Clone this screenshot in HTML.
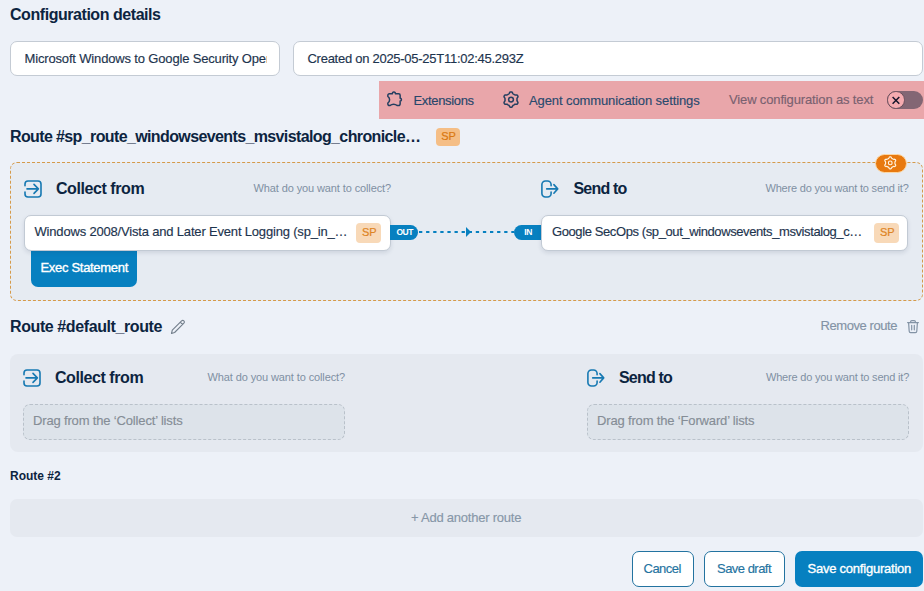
<!DOCTYPE html>
<html><head><meta charset="utf-8">
<style>
html,body{margin:0;padding:0;}
body{width:924px;height:591px;overflow:hidden;background:#edf1f8;position:relative;font-family:"Liberation Sans",sans-serif;}
.a{position:absolute;box-sizing:border-box;}
.t{position:absolute;white-space:nowrap;}
.f16{font-size:16px;line-height:17px;font-weight:700;color:#0c2440;}
.f15{font-size:15px;line-height:17px;font-weight:700;color:#0c2440;}
.f13{font-size:13px;line-height:15px;color:#1d344e;-webkit-text-stroke:0.15px currentColor;}
.f12{font-size:12px;line-height:14px;}
.f11{font-size:11px;line-height:12px;color:#7f90a3;}
.input{background:#fff;border:1px solid #c4cbd4;border-radius:7px;}
.card{background:#fff;border:1px solid #c2cad4;border-radius:7px;box-shadow:0 2px 4px rgba(30,50,80,0.12);}
.sp{position:absolute;box-sizing:border-box;width:25px;height:20px;border-radius:4px;background:#f8d9b8;color:#de8424;font-size:11px;line-height:18px;text-align:center;padding-left:1.5px;-webkit-text-stroke:0.2px currentColor;}
.drop{background:#dde3ea;border:1px dashed #b9c1ca;border-radius:7px;}
.btn{background:#fff;border:1px solid #2373a0;border-radius:7px;}
svg{position:absolute;overflow:visible;}
</style></head><body>

<!-- header -->
<div class="t f16" style="left:10px;top:6px;letter-spacing:-0.45px;">Configuration details</div>

<div class="a input" style="left:10px;top:41px;width:270px;height:35px;"></div>
<div class="t f13" style="left:24.5px;top:51px;letter-spacing:-0.16px;width:242.5px;overflow:hidden;">Microsoft Windows to Google Security Operations</div>
<div class="a input" style="left:293px;top:41px;width:630px;height:35px;"></div>
<div class="t f13" style="left:307.5px;top:51px;letter-spacing:-0.27px;">Created on 2025-05-25T11:02:45.293Z</div>

<!-- pink bar -->
<div class="a" style="left:379px;top:81px;width:545px;height:37.5px;background:#e9a6aa;"></div>
<svg style="left:387px;top:91px" width="16" height="16" viewBox="0 0 16 16" fill="none" stroke="#243f60" stroke-width="1.5" stroke-linejoin="round">
  <path d="M2.34 2.8 H5.45 A1.5 1.5 0 1 1 8.35 2.8 H11.65 A1.5 1.5 0 0 1 13.15 4.3 V7.37 A1.3 1.3 0 0 1 13.15 9.97 V13.05 A1.5 1.5 0 0 1 11.65 14.55 H10.4 A6.4 6.4 0 0 0 2.8 14.55 H2.34 A1.5 1.5 0 0 1 0.84 13.05 V12 A3.97 3.97 0 0 0 0.84 5.4 V4.3 A1.5 1.5 0 0 1 2.34 2.8 Z"/>
</svg>
<div class="t f13" style="left:413.5px;top:93px;letter-spacing:-0.33px;color:#27466a;">Extensions</div>
<svg style="left:503px;top:91px" width="16" height="17" viewBox="0 0 16 17" fill="none" stroke="#243f60" stroke-width="1.5" stroke-linejoin="round">
  <path d="M14.00 8.60L13.98 9.12L13.99 9.66L14.26 10.28L14.88 11.11L14.98 11.85L14.67 12.45L14.31 13.02L13.61 13.31L12.58 13.18L11.91 13.26L11.44 13.52L11.00 13.80L10.54 14.04L10.08 14.32L9.68 14.86L9.27 15.81L8.67 16.27L8.00 16.30L7.33 16.27L6.73 15.81L6.32 14.86L5.92 14.32L5.46 14.04L5.00 13.80L4.56 13.52L4.09 13.26L3.42 13.18L2.39 13.31L1.69 13.02L1.33 12.45L1.02 11.85L1.12 11.11L1.74 10.28L2.01 9.66L2.02 9.12L2.00 8.60L2.02 8.08L2.01 7.54L1.74 6.92L1.12 6.09L1.02 5.35L1.33 4.75L1.69 4.18L2.39 3.89L3.42 4.02L4.09 3.94L4.56 3.68L5.00 3.40L5.46 3.16L5.92 2.88L6.32 2.34L6.73 1.39L7.33 0.93L8.00 0.90L8.67 0.93L9.27 1.39L9.68 2.34L10.08 2.88L10.54 3.16L11.00 3.40L11.44 3.68L11.91 3.94L12.58 4.02L13.61 3.89L14.31 4.18L14.67 4.75L14.98 5.35L14.88 6.09L14.26 6.92L13.99 7.54L13.98 8.08Z"/>
  <circle cx="8" cy="8.6" r="2.4"/>
</svg>
<div class="t f13" style="left:529px;top:93px;letter-spacing:-0.1px;color:#2a4a6e;">Agent communication settings</div>
<div class="t f13" style="left:729px;top:92px;letter-spacing:-0.14px;color:#7a6170;">View configuration as text</div>
<div class="a" style="left:887px;top:91px;width:36px;height:17.6px;border-radius:9px;background:#836674;"></div>
<div class="a" style="left:887px;top:91px;width:17.6px;height:17.6px;border-radius:50%;background:#f5abb0;border:1px solid #6b4f5c;"></div>
<svg style="left:891px;top:95px" width="10" height="10" viewBox="0 0 10 10" stroke="#15152a" stroke-width="1.5" stroke-linecap="butt">
  <path d="M1.6 2 L8.3 8.7 M8.3 2 L1.6 8.7"/>
</svg>

<!-- Route 1 -->
<div class="t f16" style="left:10px;top:128px;letter-spacing:-0.62px;">Route #sp_route_windowsevents_msvistalog_chronicle…</div>
<div class="a" style="left:436px;top:128px;width:24px;height:17.5px;border-radius:4px;background:#f5be86;color:#da7810;font-size:11px;line-height:16px;text-align:center;padding-left:1px;-webkit-text-stroke:0.2px currentColor;">SP</div>

<div class="a" style="left:10px;top:162px;width:913px;height:139px;border:1px dashed #d59a4a;border-radius:7px;background:#e6ebf2;"></div>
<div class="a" style="left:874.5px;top:153.5px;width:32px;height:19.5px;border-radius:10px;background:#e8790f;border:1px solid #fcd7a4;"></div>
<svg style="left:884px;top:156.2px" width="12.5" height="13.6" viewBox="0 0 16 17" fill="none" stroke="#fff3e0" stroke-width="1.5" stroke-linejoin="round">
  <path d="M14.00 8.60L13.98 9.12L13.99 9.66L14.26 10.28L14.88 11.11L14.98 11.85L14.67 12.45L14.31 13.02L13.61 13.31L12.58 13.18L11.91 13.26L11.44 13.52L11.00 13.80L10.54 14.04L10.08 14.32L9.68 14.86L9.27 15.81L8.67 16.27L8.00 16.30L7.33 16.27L6.73 15.81L6.32 14.86L5.92 14.32L5.46 14.04L5.00 13.80L4.56 13.52L4.09 13.26L3.42 13.18L2.39 13.31L1.69 13.02L1.33 12.45L1.02 11.85L1.12 11.11L1.74 10.28L2.01 9.66L2.02 9.12L2.00 8.60L2.02 8.08L2.01 7.54L1.74 6.92L1.12 6.09L1.02 5.35L1.33 4.75L1.69 4.18L2.39 3.89L3.42 4.02L4.09 3.94L4.56 3.68L5.00 3.40L5.46 3.16L5.92 2.88L6.32 2.34L6.73 1.39L7.33 0.93L8.00 0.90L8.67 0.93L9.27 1.39L9.68 2.34L10.08 2.88L10.54 3.16L11.00 3.40L11.44 3.68L11.91 3.94L12.58 4.02L13.61 3.89L14.31 4.18L14.67 4.75L14.98 5.35L14.88 6.09L14.26 6.92L13.99 7.54L13.98 8.08Z"/>
  <circle cx="8" cy="8.6" r="2.4"/>
</svg>

<svg style="left:24px;top:180px" width="18" height="18" viewBox="0 0 18 18" fill="none" stroke="#1779b2" stroke-width="1.6" stroke-linecap="round" stroke-linejoin="round">
  <path d="M1 5.8 V4 A3 3 0 0 1 4 1 H14 A3 3 0 0 1 17 4 V14 A3 3 0 0 1 14 17 H4 A3 3 0 0 1 1 14 V12"/>
  <path d="M3 8.9 H14.4 M10 4.4 L14.4 8.9 L10 13.4"/>
</svg>
<div class="t f16" style="left:56px;top:180px;letter-spacing:-0.43px;">Collect from</div>
<div class="t f11" style="left:253.5px;top:182px;letter-spacing:-0.11px;">What do you want to collect?</div>

<svg style="left:540px;top:180px" width="18" height="18" viewBox="0 0 18 18" fill="none" stroke="#1779b2" stroke-width="1.6" stroke-linecap="round" stroke-linejoin="round">
  <path d="M11.1 5.8 V4.5 A3.5 3.5 0 0 0 7.6 1 H5.4 A3.5 3.5 0 0 0 1.9 4.5 V13.5 A3.5 3.5 0 0 0 5.4 17 H7.6 A3.5 3.5 0 0 0 11.1 13.5 V12"/>
  <path d="M6.7 8.9 H17.7 M13.9 4.6 L17.7 8.9 L13.9 13.2"/>
</svg>
<div class="t f16" style="left:573.5px;top:180px;letter-spacing:-0.8px;">Send to</div>
<div class="t f11" style="left:765.5px;top:182px;letter-spacing:-0.19px;">Where do you want to send it?</div>

<!-- exec statement -->
<div class="a" style="left:31px;top:244px;width:106px;height:43px;background:#0780c0;border-radius:0 0 7px 7px;"></div>
<div class="t f13" style="left:40.5px;top:260px;letter-spacing:-0.31px;color:#fff;-webkit-text-stroke:0.35px #fff;">Exec Statement</div>

<!-- left card -->
<div class="a card" style="left:24px;top:215px;width:367px;height:36px;"></div>
<div class="t f13" style="left:34.5px;top:224px;letter-spacing:-0.18px;">Windows 2008/Vista and Later Event Logging (sp_in_…</div>
<div class="sp" style="left:356px;top:223px;">SP</div>

<!-- connector -->
<div class="a" style="left:390px;top:225px;width:28px;height:15px;background:#0780c0;border-radius:0 8px 8px 0;"></div>
<div class="t" style="left:396.5px;top:227px;font-size:8.5px;line-height:10px;font-weight:700;color:#fff;letter-spacing:-0.5px;">OUT</div>
<svg style="left:418px;top:226px" width="96" height="12" viewBox="0 0 96 12">
  <line x1="1" y1="6" x2="96" y2="6" stroke="#0780c0" stroke-width="2" stroke-dasharray="3.3 3.8"/>
  <path d="M48 1 L53 6 L48 11 Z" fill="#0780c0"/>
</svg>
<div class="a" style="left:514px;top:225px;width:28px;height:15px;background:#0780c0;border-radius:8px 0 0 8px;"></div>
<div class="t" style="left:524.2px;top:227px;font-size:8.5px;line-height:10px;font-weight:700;color:#fff;letter-spacing:-0.3px;">IN</div>

<!-- right card -->
<div class="a card" style="left:541px;top:215px;width:367px;height:36px;"></div>
<div class="t f13" style="left:552px;top:224px;letter-spacing:-0.4px;">Google SecOps (sp_out_windowsevents_msvistalog_c…</div>
<div class="sp" style="left:874px;top:223px;">SP</div>

<!-- Route default -->
<div class="t f16" style="left:10px;top:318px;letter-spacing:-0.4px;">Route #default_route</div>
<svg style="left:171px;top:320px" width="14" height="14" viewBox="0 0 14 14" fill="none" stroke="#737f8c" stroke-width="1.1" stroke-linejoin="round">
  <path d="M0.5 13.5 L1.3 10.2 L10.6 0.9 A1.6 1.6 0 0 1 12.9 3.2 L3.6 12.5 Z M9.3 2.2 L11.6 4.5"/>
</svg>
<div class="t f13" style="left:820.5px;top:318px;letter-spacing:-0.43px;color:#8393a5;">Remove route</div>
<svg style="left:907px;top:320px" width="12" height="14" viewBox="0 0 12 14" fill="none" stroke="#8393a5" stroke-width="1.2" stroke-linecap="round" stroke-linejoin="round">
  <path d="M0.6 2.6 H11.4 M3.6 2.6 V1.8 A1.2 1.2 0 0 1 4.8 0.6 H7.2 A1.2 1.2 0 0 1 8.4 1.8 V2.6 M1.6 2.6 L2.2 11.3 A1.4 1.4 0 0 0 3.6 12.6 H8.4 A1.4 1.4 0 0 0 9.8 11.3 L10.4 2.6 M4.7 5.3 V9.8 M7.3 5.3 V9.8"/>
</svg>

<div class="a" style="left:10px;top:354px;width:913px;height:98px;background:#e5e9f0;border-radius:8px;"></div>
<svg style="left:23px;top:369px" width="18" height="18" viewBox="0 0 18 18" fill="none" stroke="#1779b2" stroke-width="1.6" stroke-linecap="round" stroke-linejoin="round">
  <path d="M1 5.8 V4 A3 3 0 0 1 4 1 H14 A3 3 0 0 1 17 4 V14 A3 3 0 0 1 14 17 H4 A3 3 0 0 1 1 14 V12"/>
  <path d="M3 8.9 H14.4 M10 4.4 L14.4 8.9 L10 13.4"/>
</svg>
<div class="t f16" style="left:55px;top:369px;letter-spacing:-0.43px;">Collect from</div>
<div class="t f11" style="left:207.5px;top:371px;letter-spacing:-0.11px;">What do you want to collect?</div>
<svg style="left:586px;top:369px" width="18" height="18" viewBox="0 0 18 18" fill="none" stroke="#1779b2" stroke-width="1.6" stroke-linecap="round" stroke-linejoin="round">
  <path d="M11.1 5.8 V4.5 A3.5 3.5 0 0 0 7.6 1 H5.4 A3.5 3.5 0 0 0 1.9 4.5 V13.5 A3.5 3.5 0 0 0 5.4 17 H7.6 A3.5 3.5 0 0 0 11.1 13.5 V12"/>
  <path d="M6.7 8.9 H17.7 M13.9 4.6 L17.7 8.9 L13.9 13.2"/>
</svg>
<div class="t f16" style="left:619px;top:369px;letter-spacing:-0.8px;">Send to</div>
<div class="t f11" style="left:766px;top:371px;letter-spacing:-0.19px;">Where do you want to send it?</div>

<div class="a drop" style="left:23px;top:404px;width:322px;height:36px;"></div>
<div class="t f13" style="left:33px;top:413px;letter-spacing:-0.16px;color:#858d96;">Drag from the ‘Collect’ lists</div>
<div class="a drop" style="left:587px;top:404px;width:322px;height:36px;"></div>
<div class="t f13" style="left:597px;top:413px;letter-spacing:-0.16px;color:#858d96;">Drag from the ‘Forward’ lists</div>

<!-- Route 2 -->
<div class="t f12" style="left:10px;top:469px;font-weight:700;color:#0c2440;">Route #2</div>
<div class="a" style="left:10px;top:499px;width:913px;height:38px;background:#e5e9f0;border-radius:7px;"></div>
<div class="t f13" style="left:411px;top:510px;letter-spacing:-0.23px;color:#8797a8;">+ Add another route</div>

<!-- buttons -->
<div class="a btn" style="left:632px;top:551px;width:62px;height:36px;"></div>
<div class="t f13" style="left:643.5px;top:561px;letter-spacing:-0.5px;color:#24739f;">Cancel</div>
<div class="a btn" style="left:704px;top:551px;width:81px;height:36px;"></div>
<div class="t f13" style="left:717px;top:561px;letter-spacing:-0.52px;color:#24739f;">Save draft</div>
<div class="a" style="left:795px;top:551px;width:128px;height:36px;background:#0780c0;border-radius:7px;"></div>
<div class="t f13" style="left:807.5px;top:561px;letter-spacing:-0.23px;color:#fff;-webkit-text-stroke:0.35px #fff;">Save configuration</div>

</body></html>
